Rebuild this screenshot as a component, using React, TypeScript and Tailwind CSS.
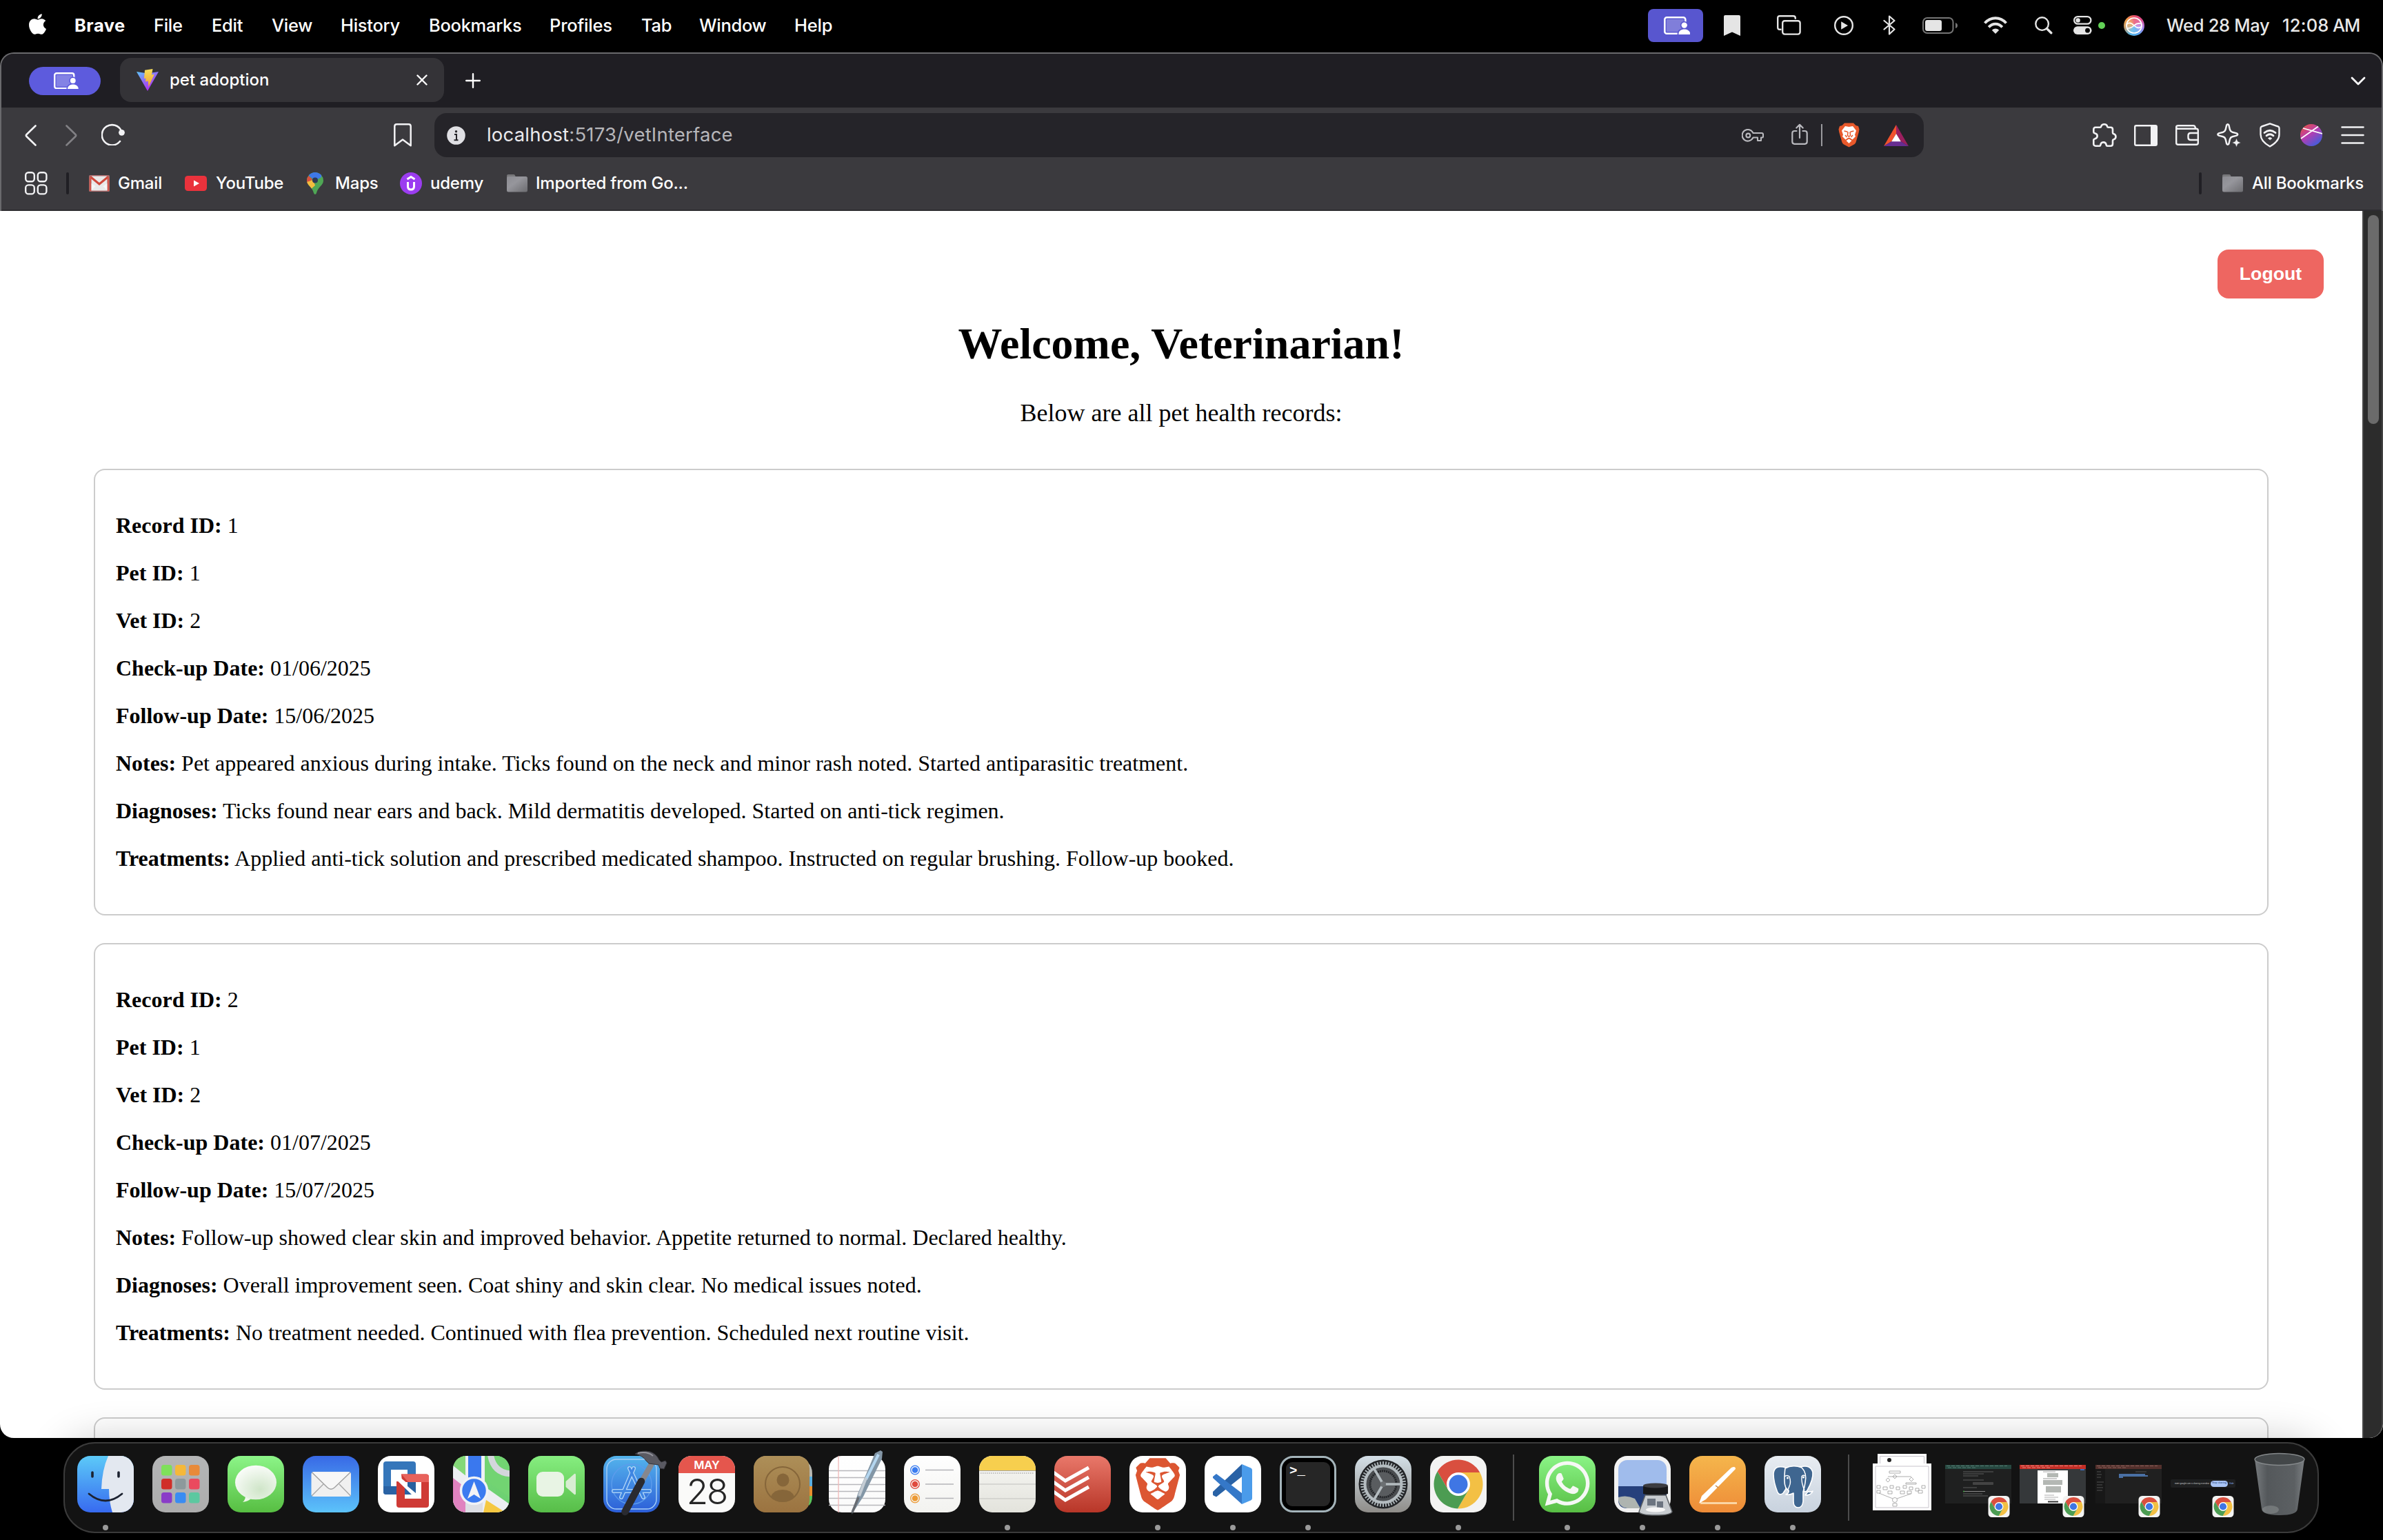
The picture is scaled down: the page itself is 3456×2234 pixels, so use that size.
import React from "react";
import { FaApple, FaBrave, FaWhatsapp } from "react-icons/fa6";

type Kids = { children?: React.ReactNode };

/* ---------- shared glyphs ---------- */

function ScreenShare({ bg, className }: { bg: string; className: string }) {
  return (
    <svg viewBox="0 0 38.5 26" className={className} fill="none">
      <rect x="1.3" y="1.3" width="30" height="23.4" rx="3" stroke="#fff" strokeWidth="2.6" />
      <rect x="4" y="4" width="25" height="18" fill="#fff" fillOpacity=".24" />
      <g stroke={bg} strokeWidth="3.4" fill={bg}>
        <circle cx="29.7" cy="12.6" r="4.2" />
        <path d="M21.4 27v-2c0-4 3.6-6.6 8.4-6.6s8.4 2.6 8.4 6.6v2z" />
      </g>
      <circle cx="29.7" cy="12.6" r="4.2" fill="#fff" />
      <path d="M21.4 26v-.8c0-4 3.6-6.7 8.4-6.7s8.4 2.7 8.4 6.7v.8z" fill="#fff" />
    </svg>
  );
}

function Chrome({ className, plain }: { className: string; plain?: boolean }) {
  return (
    <svg viewBox="0 0 82 82" className={className}>
      <rect width="82" height="82" rx={plain ? 14 : 19} fill="#f3f3f2" />
      <g transform="translate(41 41)">
        <path d="M-14.7 8.5L-30.3-18.5A35.5 35.5 0 0 1 31.2-17H0L0 0z" fill="#d94f3f" />
        <path d="M0-17H31.2A35.5 35.5 0 0 1-.9 35.5L14.7 8.5 0 0z" fill="#f3c044" />
        <path d="M14.7 8.5L-.9 35.5A35.5 35.5 0 0 1-30.3-18.5L-14.7 8.5 0 0z" fill="#4c9c52" />
        <circle r="17" fill="#fff" />
        <circle r="13.5" fill="#3f76e4" />
      </g>
    </svg>
  );
}

function Folder() {
  return (
    <svg viewBox="0 0 30 26" className="h-[26px] w-[30px]">
      <defs>
        <linearGradient id="fold" x1="0" y1="0" x2="1" y2="1">
          <stop offset="0" stopColor="#8c8c92" />
          <stop offset=".4" stopColor="#96969c" />
          <stop offset="1" stopColor="#6c6c70" />
        </linearGradient>
      </defs>
      <path d="M0 6V2q0-2 2-2h8q2 0 2.500 3l1 3z" fill="#77777a" />
      <rect y="3" width="30" height="22.500" rx="2.500" fill="url(#fold)" />
    </svg>
  );
}

/* ---------- menu bar ---------- */

function MenuBar() {
  return (
    <div className="flex h-[76px] w-full items-center bg-black pb-[3px] text-[25.5px] leading-none text-white">
      <FaApple className="-mt-[4px] ml-[40px] h-[34px] w-[29px]" />
      <span className="ml-[39px] w-[115px] font-bold tracking-[0.5px]">Brave</span>
      <span className="w-[84px] font-medium tracking-[-0.3px]">File</span>
      <span className="w-[87px] font-medium tracking-[-0.3px]">Edit</span>
      <span className="w-[100px] font-medium tracking-[-0.3px]">View</span>
      <span className="w-[128px] font-medium tracking-[-0.3px]">History</span>
      <span className="w-[175px] font-medium tracking-[-0.3px]">Bookmarks</span>
      <span className="w-[133px] font-medium tracking-[-0.2px]">Profiles</span>
      <span className="w-[84px] font-medium tracking-[-0.3px]">Tab</span>
      <span className="w-[138px] font-medium tracking-[-0.3px]">Window</span>
      <span className="font-medium tracking-[-0.2px]">Help</span>
      <div className="ml-auto flex items-center">
        <div className="flex h-[48px] w-[80px] items-center justify-center rounded-[8px] bg-[#5856cf]">
          <ScreenShare bg="#5856cf" className="ml-[4px] h-[26px] w-[38.5px]" />
        </div>
        <svg viewBox="0 0 24 30" className="ml-[30px] h-[30px] w-[24px]">
          <path d="M0 2q0-2 2-2h20q2 0 2 2v28l-12-5.500L0 30z" fill="#e5e5e5" />
        </svg>
        <svg viewBox="0 0 35 29" className="ml-[53px] h-[29px] w-[35px]" fill="none" stroke="#e5e5e5" strokeWidth="2.400">
          <path d="M6.500 20.800H4.200q-3 0-3-3V4.200q0-3 3-3h19.600q3 0 3 3v1.500" />
          <rect x="8.200" y="8.200" width="25.400" height="19.400" rx="3" />
        </svg>
        <svg viewBox="0 0 28 28" className="ml-[48px] h-[28px] w-[28px]">
          <circle cx="14" cy="14" r="12.800" fill="none" stroke="#e5e5e5" strokeWidth="2.400" />
          <path d="M10.200 8.200v11.600L20 14z" fill="#e5e5e5" />
        </svg>
        <svg viewBox="0 0 18 29" className="ml-[43px] h-[29px] w-[18px]" fill="none" stroke="#e5e5e5" strokeWidth="2.200" strokeLinejoin="round" strokeLinecap="round">
          <path d="M1.500 8l15 12.500L9 27.500v-26L16.500 8 1.500 20.500" />
        </svg>
        <svg viewBox="0 0 51 24" className="ml-[39px] h-[24px] w-[51px]">
          <rect x="1" y="1" width="43.500" height="22" rx="6" fill="none" stroke="#757575" strokeWidth="2" />
          <rect x="4" y="4" width="24" height="16" rx="3" fill="#e5e5e5" />
          <path d="M48 8q3 1 3 4t-3 4z" fill="#757575" />
        </svg>
        <svg viewBox="0 0 34 25" className="ml-[38px] h-[25px] w-[34px]" fill="none" stroke="#e5e5e5" strokeWidth="4">
          <path d="M1.500 9.500Q8 2.200 17 2.200T32.500 9.500" />
          <path d="M7.200 15.300Q11.500 10.800 17 10.800T26.800 15.300" />
          <path d="M17 25l-5.200-5.300q2.200-2.200 5.200-2.200t5.200 2.200z" fill="#e5e5e5" stroke="none" />
        </svg>
        <svg viewBox="0 0 26 26" className="ml-[40px] h-[26px] w-[26px]" fill="none" stroke="#e5e5e5" strokeLinecap="round">
          <circle cx="10.600" cy="10.600" r="9.300" strokeWidth="2.400" />
          <path d="M17.500 17.500l6.300 6.300" strokeWidth="3.400" />
        </svg>
        <svg viewBox="0 0 27 27" className="ml-[30px] h-[27px] w-[27px]">
          <rect x="1.100" y="1.100" width="24.300" height="10.600" rx="5.300" fill="none" stroke="#e5e5e5" strokeWidth="2.200" />
          <circle cx="6.600" cy="6.400" r="3.200" fill="#e5e5e5" />
          <rect y="15.300" width="26.500" height="11.700" rx="5.850" fill="#e5e5e5" />
          <circle cx="20.500" cy="21.200" r="3.400" fill="#000" />
        </svg>
        <div className="ml-[9px] h-[10px] w-[10px] rounded-full bg-[#62d256]" />
        <div className="ml-[27px] flex h-[30px] w-[30px] items-center justify-center rounded-full bg-[conic-gradient(#e8506a,#e04a8a,#b08af0,#58a8f0,#5ab8e8,#c8a070,#f0a048,#e8506a)]">
          <svg viewBox="0 0 24 24" className="h-[24px] w-[24px]" fill="none" stroke="#fff" strokeWidth="1.700">
            <circle cx="12" cy="12" r="11" fill="#fff" fillOpacity=".18" />
            <path d="M1.500 10Q6 6 12 12t10.500 1.500M2.500 16Q8 16 12 12t10-3" />
          </svg>
        </div>
        <span className="ml-[32px] w-[168px] whitespace-nowrap font-medium tracking-[-0.3px] text-[#e8e8e8]">Wed 28 May</span>
        <span className="w-[73px] whitespace-nowrap font-medium tracking-[0.2px] text-[#e8e8e8]">12:08</span>
        <span className="w-[73px] whitespace-nowrap font-medium tracking-[-1px] text-[#e8e8e8]">AM</span>
      </div>
    </div>
  );
}

/* ---------- browser chrome ---------- */

function TabStrip() {
  return (
    <div className="flex h-[78px] items-center bg-[#1f1e23] text-white">
      <div className="ml-[40px] flex h-[41px] w-[104px] items-center justify-center rounded-full bg-[#5d5bdd]">
        <ScreenShare bg="#5d5bdd" className="ml-[4px] h-[24.500px] w-[36px]" />
      </div>
      <div className="-mt-[2px] ml-[28px] flex h-[64px] w-[470px] items-center rounded-[16px] bg-[#343337]">
        <svg viewBox="0 0 32 32" className="ml-[24px] h-[32px] w-[32px]">
          <defs>
            <linearGradient id="va" x1="0" y1="0" x2=".6" y2="1">
              <stop offset="0" stopColor="#5cc8fa" />
              <stop offset=".5" stopColor="#8f6bf5" />
              <stop offset="1" stopColor="#b32cf0" />
            </linearGradient>
            <linearGradient id="vb" x1="0" y1="0" x2="0" y2="1">
              <stop offset="0" stopColor="#f8e05a" />
              <stop offset="1" stopColor="#f0a030" />
            </linearGradient>
          </defs>
          <path d="M0 4l16 2.500L32 4 16 32z" fill="url(#va)" />
          <path d="M12 1.800L23.500 0l-1.500 8.500 3.800-.8L17.500 26l-.8-8.500-3.700 1 .5-5-2.500.5z" fill="url(#vb)" />
        </svg>
        <span className="ml-[16px] w-[358px] text-[24px] font-medium leading-none">pet adoption</span>
        <svg viewBox="0 0 16 16" className="h-[16px] w-[16px]" stroke="#fff" strokeWidth="2.400" strokeLinecap="round">
          <path d="M1.500 1.500l13 13M14.500 1.500l-13 13" />
        </svg>
      </div>
      <svg viewBox="0 0 22 22" className="ml-[31px] h-[22px] w-[22px]" stroke="#fff" strokeWidth="2.400" strokeLinecap="round">
        <path d="M11 1.200v19.600M1.200 11h19.600" />
      </svg>
      <svg viewBox="0 0 22 13" className="ml-auto mr-[23px] h-[13px] w-[22px]" stroke="#fff" strokeWidth="2.800" strokeLinecap="round" strokeLinejoin="round" fill="none">
        <path d="M2 2l9 9 9-9" />
      </svg>
    </div>
  );
}

function Slot({ children }: Kids) {
  return <div className="flex w-[60px] items-center justify-center">{children}</div>;
}

function ToolBar() {
  return (
    <div className="flex h-[80px] items-center">
      <svg viewBox="0 0 17 31" className="ml-[34px] h-[31px] w-[17px]" fill="none" stroke="#f2f2f4" strokeWidth="2.600" strokeLinecap="round" strokeLinejoin="round">
        <path d="M15.500 1.500L2.600 14q-1.500 1.500 0 3l12.900 12.500" />
      </svg>
      <svg viewBox="0 0 17 31" className="ml-[42px] h-[31px] w-[17px]" fill="none" stroke="#818084" strokeWidth="2.600" strokeLinecap="round" strokeLinejoin="round">
        <path d="M1.500 1.500L14.400 14q1.500 1.500 0 3L1.500 29.500" />
      </svg>
      <svg viewBox="0 0 34 32" className="ml-[35px] -mt-[2px] h-[32px] w-[34px]" fill="none" stroke="#f2f2f4" strokeWidth="2.600" strokeLinecap="round">
        <path d="M29 11A14.700 14.700 0 1 0 27 26" />
        <circle cx="29.500" cy="13.300" r="4.400" fill="#f2f2f4" stroke="none" />
      </svg>
      <svg viewBox="0 0 26 34" className="ml-[390px] h-[34px] w-[26px]" fill="none" stroke="#f2f2f4" strokeWidth="2.500" strokeLinejoin="round">
        <path d="M1.300 4.300q0-3 3-3h17.400q3 0 3 3v28L13 23.500 1.300 32.300z" />
      </svg>
      <div className="ml-[33px] flex h-[64px] w-[2160px] items-center rounded-[18px] bg-[#252429]">
        <svg viewBox="0 0 27 27" className="ml-[18px] h-[27px] w-[27px]">
          <circle cx="13.500" cy="13.500" r="13.300" fill="#e0e0e4" />
          <circle cx="13.500" cy="7.700" r="1.700" fill="#252429" />
          <path d="M11 12h3v8M10.500 20.200h6" stroke="#252429" strokeWidth="2" fill="none" />
        </svg>
        <span className="ml-[31px] flex-1 text-[27.5px] leading-none tracking-[0.2px] text-[#b6b6ba]">
          <span className="text-[#e9e9ec]">localhost</span>:5173/vetInterface
        </span>
        <svg viewBox="0 0 32 19" className="h-[19px] w-[32px]" fill="none" stroke="#b9b9be" strokeWidth="2.100" strokeLinejoin="round">
          <path d="M16.500 6H29q2 0 2 2v3q0 1.500-1.500 1.500H28V17h-5v-4.500h-6.500A8.300 8.300 0 1 1 16.500 6z" />
          <circle cx="9.300" cy="9.500" r="2.900" />
        </svg>
        <svg viewBox="0 0 24 32" className="ml-[40px] -mt-[2px] h-[32px] w-[24px]" fill="none" stroke="#b9b9be" strokeWidth="2.200" strokeLinecap="round" strokeLinejoin="round">
          <path d="M7.500 11H4.500q-3.200 0-3.200 3.200v12.400q0 3.200 3.200 3.200h15q3.200 0 3.200-3.200V14.200q0-3.200-3.200-3.200h-3M12 21V2M7.300 6.500L12 1.800l4.700 4.700" />
        </svg>
        <div className="ml-[19px] h-[32px] w-[2px] bg-[#9a9a9e]" />
        <svg viewBox="0 0 31 35" className="ml-[23px] h-[36px] w-[31px]">
          <path d="M9 0h13l3.500 3.500 3.500 1L30.500 9l-.8 4.500L25.500 28q-.8 2-2.500 3l-7.500 4L8 31q-1.700-1-2.500-3L1.300 13.500.5 9 2 4.500l3.500-1z" fill="#e8592b" />
          <path d="M10 4.500l5.500 1 5.500-1L26 11l-2 6 1 2.500-4.500 4.500-3.500-2.500-1.500-.5-1.500.5-3.500 2.500L6 19.500 7 17l-2-6z" fill="#fff" />
          <path d="M15.500 23l4 2.500-4 4-4-4z" fill="#fff" />
          <path d="M8.500 11.500l4 1 1.500 1-.6 4.500 2.100 1.500 2.100-1.500-.6-4.500 1.500-1 4-1M10 17.500l2.500 3M21 17.500l-2.500 3" stroke="#e8592b" strokeWidth="1.500" fill="none" />
        </svg>
        <svg viewBox="0 0 36 31" className="ml-[35px] mr-[22px] h-[31px] w-[36px]">
          <path d="M18 0L0 31l11.500-7L18 13z" fill="#f0522d" />
          <path d="M18 0l18 31-11.500-7L18 13z" fill="#9b1f5f" />
          <path d="M0 31h36l-11.500-7h-13z" fill="#662d91" />
          <path d="M18 13l6.800 11.200H11.200z" fill="#fff" />
        </svg>
      </div>
      <div className="ml-[232px] flex items-center">
        <Slot>
          <svg viewBox="0 0 35 34" className="h-[34px] w-[35px]" fill="none" stroke="#f2f2f4" strokeWidth="2.600" strokeLinejoin="round">
            <path d="M4 5.800h6.600q1.400 0 1.700-1.500Q13 1.300 16.700 1.300T21 4.300q.3 1.500 1.700 1.500H26q3 0 3 3v4.700q0 1.400 1.500 1.800 3 .9 3 4t-3 4q-1.500.4-1.500 1.800v4.400q0 3.200-3 3.200h-5q-1 0-1.300-1.300-.6-4-4.200-4t-4.200 4Q11 32.700 10 32.700H4.300q-3 0-3-3V24q0-1.300 1.500-1.600 3.900-.7 3.900-4.100t-3.900-4.100q-1.500-.3-1.500-1.600V8.800q0-3 2.700-3z" />
          </svg>
        </Slot>
        <Slot>
          <svg viewBox="0 0 34 31" className="h-[31px] w-[34px]">
            <rect x="1.200" y="1.200" width="31.600" height="28.600" rx="1.800" fill="none" stroke="#f2f2f4" strokeWidth="2.400" />
            <path d="M24 1h9v29h-9z" fill="#f2f2f4" />
          </svg>
        </Slot>
        <Slot>
          <svg viewBox="0 0 34 30" className="h-[30px] w-[34px]" fill="none" stroke="#f2f2f4" strokeWidth="2.400" strokeLinejoin="round">
            <path d="M32.800 12V8.300q0-2.600-2.600-2.600H3.800q-2.600 0-2.600-2.400 0-2.100 2.600-2.100H26q2 0 2.600 2.200l.6 2.300M1.200 3.500v22.700q0 2.600 2.600 2.600h26.400q2.600 0 2.600-2.600V12H22q-3.500 0-3.500 3.500v3q0 3.500 3.500 3.500h10.500" />
          </svg>
        </Slot>
        <Slot>
          <svg viewBox="0 0 34 34" className="h-[34px] w-[34px] overflow-visible">
            <path d="M14.200 2.500q1.600-2.400 3.200 0l1.600 6.700q.8 2.800 3.600 3.600l6.200 1.600q2.900 1.600 0 3.200l-6.200 1.600q-2.800.8-3.600 3.600l-1.600 6.700q-1.600 2.400-3.200 0l-1.600-6.700q-.8-2.800-3.600-3.600L2.800 17.600q-2.900-1.600 0-3.200L9 12.800q2.800-.8 3.600-3.600z" fill="none" stroke="#f2f2f4" strokeWidth="2.500" strokeLinejoin="round" />
            <path d="M28.500 21.500l1.900 4.600 4.600 1.900-4.600 1.900-1.900 4.600-1.900-4.600L22 28l4.600-1.900z" fill="#f2f2f4" stroke="#3b3a3e" strokeWidth="0.600" />
          </svg>
        </Slot>
        <Slot>
          <svg viewBox="0 0 30 36" className="h-[36px] w-[30px]" fill="none" stroke="#f2f2f4" strokeWidth="2.400" strokeLinejoin="round" strokeLinecap="round">
            <path d="M15 1.300l12 4.200q1.500.6 1.500 2.500V17q0 10-13.500 17.500Q1.500 27 1.500 17V8q0-1.900 1.500-2.500z" />
            <path d="M7 14.500q8-6.500 16 0M10 18.800q5-4 10 0" strokeWidth="2.800" />
            <path d="M15 24.500l-2.500-2q2.500-1.800 5 0z" fill="#f2f2f4" strokeWidth="1" />
          </svg>
        </Slot>
        <Slot>
          <svg viewBox="0 0 32 32" className="h-[32px] w-[32px]">
            <defs>
              <linearGradient id="prof" x1=".1" y1="0" x2=".8" y2="1">
                <stop offset="0" stopColor="#e8553c" />
                <stop offset=".45" stopColor="#b83cb0" />
                <stop offset="1" stopColor="#3560e0" />
              </linearGradient>
            </defs>
            <circle cx="16" cy="16" r="16" fill="url(#prof)" />
            <path d="M4 6l28 8M26 3.500L1 21" stroke="#fff" strokeWidth="1.700" />
          </svg>
        </Slot>
        <Slot>
          <svg viewBox="0 0 34 26" className="h-[26px] w-[34px]" stroke="#f2f2f4" strokeWidth="2.500" strokeLinecap="round">
            <path d="M1.500 1.500h31M1.500 13h31M1.500 24.500h31" />
          </svg>
        </Slot>
      </div>
    </div>
  );
}

function BookmarksBar() {
  return (
    <div className="flex h-[60px] items-center text-[24px] font-medium leading-none text-white">
      <svg viewBox="0 0 33 34" className="ml-[34px] h-[34px] w-[33px]" fill="none" stroke="#f2f2f4" strokeWidth="2.400">
        <rect x="1.200" y="1.200" width="12.600" height="13" rx="4" />
        <rect x="18.800" y="1.200" width="12.600" height="13" rx="4" />
        <rect x="1.200" y="19.400" width="12.600" height="13" rx="4" />
        <rect x="18.800" y="19.400" width="12.600" height="13" rx="4" />
      </svg>
      <div className="ml-[27px] h-[32px] w-[4px] rounded-full bg-[#201f24]" />
      <svg viewBox="0 0 30 24" className="ml-[29px] h-[24px] w-[30px]">
        <rect width="30" height="24" rx="1.500" fill="#a8696a" />
        <rect x="3.500" y="1.500" width="23" height="21" fill="#e9e9e9" />
        <path d="M3.500 22.500V12l6 4zM26.500 22.500V12l-6 4z" fill="#f6f6f6" />
        <path d="M2.200 2.500L15 13 27.800 2.500" stroke="#d0493c" strokeWidth="3" fill="none" />
        <path d="M2 3v20M28 3v20" stroke="#d0574c" strokeWidth="2.400" />
      </svg>
      <span className="ml-[12px] w-[97px] tracking-[-0.2px]">Gmail</span>
      <svg viewBox="0 0 32 22" className="h-[22px] w-[32px]">
        <rect width="32" height="22" rx="4.500" fill="#ea323c" />
        <path d="M13 6.500v9l8-4.500z" fill="#fff" />
      </svg>
      <span className="ml-[13px] w-[132px] tracking-[-0.2px]">YouTube</span>
      <svg viewBox="0 0 24 32" className="h-[32px] w-[24px]">
        <defs>
          <clipPath id="pin">
            <path d="M12 0a12 12 0 0 1 12 12c0 7-8 9-10 18q-.6 2-2 2t-2-2C8 21 0 19 0 12A12 12 0 0 1 12 0z" />
          </clipPath>
        </defs>
        <g clipPath="url(#pin)">
          <rect width="24" height="32" fill="#4fa655" />
          <path d="M3 0h18v7L12 12 3 5z" fill="#3f78e8" />
          <path d="M-1 2l9 8-8 10z" fill="#d9503f" />
          <path d="M0 14l9-3 3 8-8 7z" fill="#f2bd3e" />
        </g>
        <circle cx="12" cy="11.500" r="4" fill="#2d3a55" />
      </svg>
      <span className="ml-[17px] w-[94px] tracking-[-0.2px]">Maps</span>
      <svg viewBox="0 0 32 32" className="h-[32px] w-[32px]" fill="none" stroke="#fff" strokeWidth="3">
        <circle cx="16" cy="16" r="16" fill="#9b3df0" stroke="none" />
        <path d="M10.500 10L16 6.500l5.500 3.500M11.500 14v6.500q0 4.500 4.500 4.500t4.500-4.500V14" />
      </svg>
      <span className="ml-[12px] w-[111px] tracking-[-0.2px]">udemy</span>
      <Folder />
      <span className="ml-[12px] whitespace-nowrap tracking-[-0.2px]">Imported from Go...</span>
      <div className="ml-auto h-[32px] w-[4px] rounded-full bg-[#201f24]" />
      <div className="ml-[30px] flex">
        <Folder />
      </div>
      <span className="ml-[13px] w-[188px] whitespace-nowrap tracking-[-0.2px]">All Bookmarks</span>
    </div>
  );
}

/* ---------- page ---------- */

const records = [
  {
    id: 1,
    checkup: "01/06/2025",
    followup: "15/06/2025",
    notes: "Pet appeared anxious during intake. Ticks found on the neck and minor rash noted. Started antiparasitic treatment.",
    diagnoses: "Ticks found near ears and back. Mild dermatitis developed. Started on anti-tick regimen.",
    treatments: "Applied anti-tick solution and prescribed medicated shampoo. Instructed on regular brushing. Follow-up booked.",
  },
  {
    id: 2,
    checkup: "01/07/2025",
    followup: "15/07/2025",
    notes: "Follow-up showed clear skin and improved behavior. Appetite returned to normal. Declared healthy.",
    diagnoses: "Overall improvement seen. Coat shiny and skin clear. No medical issues noted.",
    treatments: "No treatment needed. Continued with flea prevention. Scheduled next routine visit.",
  },
];

function Field({ label, value }: { label: string; value: string | number }) {
  return (
    <p>
      <strong className="font-bold">{label}:</strong> {value}
    </p>
  );
}

function Page() {
  return (
    <div className="flex h-[1780px] w-full overflow-hidden rounded-b-[20px] bg-white">
      <main className="flex w-[3426px] flex-col font-['Liberation_Serif',serif] text-black">
        <div className="flex justify-end pr-[56px] pt-[56px]">
          <button className="h-[71px] w-[154px] rounded-[16px] bg-[#ee6661] font-['Liberation_Sans',sans-serif] text-[26.7px] font-bold leading-none text-white">
            Logout
          </button>
        </div>
        <h1 className="mt-[29px] text-center text-[64px] font-bold leading-[74px]">Welcome, Veterinarian!</h1>
        <p className="mt-[43px] text-center text-[36px] leading-[41px]">Below are all pet health records:</p>
        <div className="mt-[60px] flex flex-col gap-[40px] px-[136px] text-[32px] leading-[37px]">
          {records.map((r) => (
            <section key={r.id} className="flex h-[648px] flex-col gap-[32px] rounded-[16px] border-2 border-[#ccc] px-[30px] pt-[62px]">
              <Field label="Record ID" value={r.id} />
              <Field label="Pet ID" value={1} />
              <Field label="Vet ID" value={2} />
              <Field label="Check-up Date" value={r.checkup} />
              <Field label="Follow-up Date" value={r.followup} />
              <Field label="Notes" value={r.notes} />
              <Field label="Diagnoses" value={r.diagnoses} />
              <Field label="Treatments" value={r.treatments} />
            </section>
          ))}
          <section className="h-[648px] shrink-0 rounded-[16px] border-2 border-[#ccc]" />
        </div>
      </main>
      <div className="w-[30px] rounded-br-[20px] border-x-2 border-[#444] bg-[#2c2c2c] pl-[6px] pt-[6px]">
        <div className="h-[303px] w-[16px] rounded-full bg-[#6b6b6b]" />
      </div>
    </div>
  );
}

/* ---------- dock ---------- */

function App82({ children, dot, last }: Kids & { dot?: boolean; last?: boolean }) {
  return (
    <div className={last ? "flex w-[82px] shrink-0 flex-col items-center" : "mr-[27px] flex w-[82px] shrink-0 flex-col items-center"}>
      {children}
      {dot && <div className="mt-[18px] h-[8px] w-[8px] rounded-full bg-[#9a9a9a]" />}
    </div>
  );
}

function Tile({ children, id, from, to }: Kids & { id: string; from: string; to: string }) {
  return (
    <svg viewBox="0 0 82 82" className="h-[82px] w-[82px] overflow-visible">
      <defs>
        <linearGradient id={id} x1="0" y1="0" x2="0" y2="1">
          <stop offset="0" stopColor={from} />
          <stop offset="1" stopColor={to} />
        </linearGradient>
        <clipPath id={id + "c"}>
          <rect width="82" height="82" rx="19" />
        </clipPath>
      </defs>
      <rect width="82" height="82" rx="19" fill={`url(#${id})`} />
      {children}
    </svg>
  );
}

const launchColors = ["#7fe05a", "#f5b83a", "#e88a3a", "#d02e28", "#8d999c", "#ea4a5e", "#8a3cc8", "#3a8cf2", "#5cc8a0"];
const teeth = Array.from({ length: 48 }, (_, i) => i * 7.5);

function Thumb({ children, w }: Kids & { w: string }) {
  return <div className={"relative flex h-[90px] shrink-0 " + w}>{children}</div>;
}

function Badge() {
  return <Chrome plain className="absolute right-[2px] bottom-[1px] h-[31px] w-[32px]" />;
}

function Dock() {
  return (
    <div className="relative ml-[92px] mt-[6px] flex h-[132px] w-[3271px] items-start rounded-[46px] border-2 border-[#3b3b3b] bg-[#131313] pl-[18px] pt-[18px] shadow-[0_0_60px_rgba(0,0,0,0.24)]">
      <App82 dot>
        <Tile id="fi" from="#5ccaf8" to="#376af0">
          <path d="M45 0h37v82H51Q46 66 46 48H35Q36 20 45 0z" fill="#e3e8f0" clipPath="url(#fic)" />
          <path d="M22 24v6M60 24v6" stroke="#1c2230" strokeWidth="3.600" strokeLinecap="round" />
          <path d="M17 55q24 20 48 0" stroke="#1c2230" strokeWidth="2.800" strokeLinecap="round" fill="none" />
        </Tile>
      </App82>
      <App82>
        <Tile id="la" from="#b4b5b6" to="#adadad">
          {launchColors.map((c, i) => (
            <rect key={c} x={13 + (i % 3) * 20} y={13 + Math.floor(i / 3) * 20} width="15.500" height="15.500" rx="3.500" fill={c} />
          ))}
        </Tile>
      </App82>
      <App82>
        <Tile id="me" from="#8cf588" to="#57be42">
          <defs>
            <radialGradient id="bub" cx=".6" cy=".7" r=".8">
              <stop offset="0" stopColor="#cfe5c8" />
              <stop offset="1" stopColor="#fff" />
            </radialGradient>
          </defs>
          <path d="M26 54q1 9-4 13 8-1 12-5z" fill="#eef7ea" />
          <ellipse cx="41" cy="38.500" rx="30" ry="24.800" fill="url(#bub)" />
        </Tile>
      </App82>
      <App82>
        <Tile id="ma" from="#3869e6" to="#5cc3fa">
          <rect x="12.500" y="23" width="57.500" height="36" rx="3.500" fill="#f0f0f0" />
          <path d="M13 58l17-17M69.500 58L53 41" stroke="#a8a8a8" strokeWidth="1.400" />
          <path d="M13.500 24l22.500 22q5 4.500 10 0L69 24" fill="#f7f7f7" stroke="#a0a0a0" strokeWidth="1.400" />
        </Tile>
      </App82>
      <App82>
        <Tile id="vm" from="#fff" to="#fff">
          <path fillRule="evenodd" d="M12 8h39q4 0 4 4v40q0 4-4 4H12q-4 0-4-4V12q0-4 4-4zm7 12v24h24V20z" fill="#3576ba" />
          <path d="M8 44h47v8q0 4-4 4H12q-4 0-4-4z" fill="#2a62a4" />
          <path fillRule="evenodd" d="M34 26.500h36q4 0 4 4V71q0 4-4 4H31q-4 0-4-4V37h8zM39 38v24h24V38z" fill="#cf3a35" />
          <path d="M34 26.500h36q4 0 4 4V38H44z" fill="#e8625c" />
          <path d="M19 20l36 30v6h-6L19 27z" fill="#fff" />
          <path d="M55 38v16l-12-10V38z" fill="#28609f" />
        </Tile>
      </App82>
      <App82>
        <Tile id="mp" from="#78d878" to="#6ace70">
          <g clipPath="url(#mpc)">
            <path d="M0 12l82 58v12H0z" fill="#eceef2" />
            <path d="M0 32l18 14v36H0z" fill="#e082c0" />
            <path d="M0 14l20 16-2-30H0z" fill="#84d878" />
            <path d="M48 64l28 18H44z" fill="#f5c842" />
            <path d="M18 46h25v36H18z" fill="#dcdee4" />
            <path d="M18 0h28v60H18z" fill="#eef0f4" />
            <path d="M22 0h19v50H22z" fill="#3a78ee" />
            <path d="M46 0h36v60L46 34z" fill="#72d472" />
            <path d="M54-4q4 30 32 30" stroke="#d4d6dc" strokeWidth="9" fill="none" />
          </g>
          <circle cx="30.500" cy="50.500" r="19" fill="#3b7bf0" stroke="#f0f2f6" strokeWidth="3.500" />
          <path d="M30.500 37l9.500 25-9.500-6-9.500 6z" fill="#f4f4f6" />
        </Tile>
      </App82>
      <App82>
        <Tile id="ft" from="#86ee80" to="#57bd48">
          <rect x="12" y="23" width="40" height="36" rx="9" fill="#e8f4e4" />
          <path d="M54.500 37L67 26q2-1 2 1.500v27q0 2.500-2 1.500L54.500 45z" fill="#d8edd2" />
        </Tile>
      </App82>
      <App82>
        <Tile id="xc" from="#54b4ec" to="#2c5ed8">
          <rect x="5" y="5" width="72" height="72" rx="14" fill="none" stroke="#a8d0f6" strokeWidth="1.400" />
          <circle cx="41" cy="41" r="29" fill="none" stroke="#5c9cec" strokeWidth="1.400" />
          <g fill="none" stroke="#b4d8f8" strokeWidth="6" strokeLinecap="round">
            <path d="M44 18L26 60M38 18l20 42M15 51h52" />
          </g>
          <g fill="none" stroke="#3f86e2" strokeWidth="3.400" strokeLinecap="round">
            <path d="M44 18L26 60M38 18l20 42M15 51h52" />
          </g>
          <path d="M71 10L55 38" stroke="#86878d" strokeWidth="8" />
          <path d="M55 37L31.500 81" stroke="#292a30" strokeWidth="10.500" strokeLinecap="round" />
          <path d="M46-3Q56-9 68-6q9 3 13 12l3 3 6-2 2 3-4 9-6-1-2-5-14-2-4-4Q58 0 46-3z" fill="#5a5a62" stroke="#34343a" strokeWidth="1" />
          <path d="M50-4q14-3 22 4" stroke="#94949c" strokeWidth="2" fill="none" />
        </Tile>
      </App82>
      <App82>
        <div className="flex h-[82px] w-[82px] flex-col overflow-hidden rounded-[19px] bg-[#fafaf9]">
          <div className="flex h-[25px] shrink-0 items-end justify-center bg-[#e5564d] text-[16.5px] font-semibold leading-[24px] text-white">MAY</div>
          <div className="text-center text-[51px] font-light leading-[53px] tracking-[-2px] text-[#262626]">28</div>
        </div>
      </App82>
      <App82>
        <Tile id="co" from="#ad8f58" to="#9b7340">
          <path d="M78 10q7 4 7 16v4h-7z" fill="#b8b8b0" />
          <path d="M80 30h5v14h-5z" fill="#5aaee0" />
          <path d="M80 44h5v14h-5z" fill="#e8902e" />
          <path d="M80 58h5q0 10-5 14z" fill="#5cc45a" />
          <rect width="81" height="82" rx="18" fill="url(#co)" />
          <circle cx="42" cy="41" r="25" fill="none" stroke="#86663a" strokeWidth="2" />
          <ellipse cx="42.500" cy="35" rx="9" ry="9.500" fill="#86663a" />
          <path d="M25 59q4-10 17-10t17 10q-6 7-17 7t-17-7z" fill="#86663a" />
        </Tile>
      </App82>
      <App82>
        <Tile id="te" from="#fff" to="#fafafa">
          <path d="M0 21.500h82M0 31.500h82M0 41.500h82M0 51.500h82M0 61.500h82M0 71.500h82" stroke="#b8b8bc" strokeWidth="1.300" />
          <path d="M14 0v82" stroke="#f0b8b8" strokeWidth="1.300" />
          <path d="M67-4l8-4 3 2-1 10-27 55-17 26 9-30z" fill="#8396a6" />
          <path d="M72-2L54 34" stroke="#b4d6f0" strokeWidth="4" />
          <path d="M54 32L44 58" stroke="#c4ccd4" strokeWidth="4" />
          <path d="M43 60L34 82" stroke="#686c72" strokeWidth="3.500" />
        </Tile>
      </App82>
      <App82>
        <Tile id="re" from="#fff" to="#f2f2ef">
          {["#3a7cf0", "#e04a3e", "#ec9a34"].map((c, i) => (
            <g key={c}>
              <circle cx="16" cy={20.500 + i * 20.500} r="6.300" fill="none" stroke={c} strokeWidth="1.300" />
              <circle cx="16" cy={20.500 + i * 20.500} r="4.300" fill={c} />
              <path d={`M31 ${20.500 + i * 20.500}h41`} stroke="#b4b4b8" strokeWidth="1.600" />
            </g>
          ))}
        </Tile>
      </App82>
      <App82 dot>
        <Tile id="no" from="#f8f8f5" to="#e3e3dc">
          <path d="M0 0h82v21H0z" fill="#f7cf4e" clipPath="url(#noc)" />
          <path d="M0 21.500h82" stroke="#a8a49c" strokeWidth="1.200" />
          <path d="M2 25h78" stroke="#b0b0b0" strokeWidth="1.600" strokeDasharray="1.500 1.500" />
          <path d="M0 41h82M0 62h82" stroke="#d0d0cc" strokeWidth="1.300" />
        </Tile>
      </App82>
      <App82>
        <Tile id="to" from="#e9786a" to="#b83628">
          <g clipPath="url(#toc)" fill="none" stroke="#fff" strokeWidth="5">
            <path d="M-4 22l20 14 34-19M-4 36l20 14 34-19M-4 50l20 14 34-19" />
          </g>
        </Tile>
      </App82>
      <App82 dot>
        <Tile id="br" from="#fff" to="#fff">
          <foreignObject x="8" y="2" width="66" height="78">
            <FaBrave className="h-[78px] w-[66px] text-[#dc5632]" />
          </foreignObject>
        </Tile>
      </App82>
      <App82 dot>
        <Tile id="vs" from="#fff" to="#fff">
          <path d="M12 52v4q0 1 1 1.500l4 2L54 30V12z" fill="#2962a6" />
          <path d="M12 30l5-4 37 28v16L12 32z" fill="#3578c8" />
          <path d="M54 12l13 5.500q2 1 2 3v41q0 2-2 3L54 70z" fill="#4a9bea" />
        </Tile>
      </App82>
      <App82 dot>
        <div className="flex h-[82px] w-[82px] rounded-[19px] border-[3px] border-[#a4b4ba] bg-black p-[6px]">
          <div className="flex-1 rounded-[9px] bg-[#262626] pl-[5px] pt-[4px] font-['Liberation_Mono',monospace] text-[19px] font-bold leading-none text-white">&gt;_</div>
        </div>
      </App82>
      <App82>
        <Tile id="se" from="#d4e0e8" to="#8f8d89">
          <circle cx="41" cy="41" r="35.500" fill="#222427" />
          <g stroke="#a8b0b4" strokeWidth="2">
            {teeth.map((a) => (
              <path key={a} d="M41 8v6" transform={`rotate(${a} 41 41)`} />
            ))}
          </g>
          <circle cx="41" cy="41" r="26.500" fill="#4a4d50" stroke="#b4bcc0" strokeWidth="4" />
          <circle cx="41" cy="41" r="19" fill="#595c5f" stroke="#222427" strokeWidth="3" strokeDasharray="2 1" />
          <path d="M41 41h26M41 41L28 19M41 41L28 63" stroke="#b4bcc0" strokeWidth="3.500" />
          <circle cx="41" cy="41" r="4" fill="#6c7073" />
        </Tile>
      </App82>
      <App82 dot last>
        <Chrome className="h-[82px] w-[82px]" />
      </App82>
      <div className="-mt-[2px] ml-[38px] mr-[36px] h-[96px] w-[2px] shrink-0 bg-[#4c4c4c]" />
      <App82 dot>
        <Tile id="wa" from="#8af486" to="#58be44">
          <foreignObject x="5" y="3" width="74" height="76">
            <FaWhatsapp className="h-[74px] w-[72px] text-[#f6f8f5]" />
          </foreignObject>
        </Tile>
      </App82>
      <App82 dot>
        <Tile id="pr" from="#f4f4f4" to="#f0f0f0">
          <rect x="6" y="6" width="70" height="70" rx="13" fill="#a0bcec" />
          <path d="M6 44h70v20q0 12-13 12H19Q6 76 6 64z" fill="#26407c" />
          <path d="M6 60q12-4 24 2l8 14H19Q6 74 6 62z" fill="#aeb4b0" />
          <path d="M42 44q18-5 36 0v11q-18 5-36 0z" fill="#18181a" />
          <ellipse cx="60" cy="43" rx="18" ry="3.500" fill="#3c3c40" />
          <path d="M45 57h30l9 24q-2 5-24 5t-24-5z" fill="#c8ccd0" stroke="#5c6064" strokeWidth="1.500" />
          <path d="M48 62h12v10H48zM62 66h9v9h-9z" fill="#6c7480" />
          <ellipse cx="60" cy="78" rx="14" ry="3.500" fill="#f6f6f6" />
        </Tile>
      </App82>
      <App82 dot>
        <Tile id="pg" from="#f5b64c" to="#ee8c38">
          <path d="M16 68.500h53" stroke="#fbd5a4" strokeWidth="3" />
          <path d="M61 17q6-3 6 2L24 63l-10 6 4-11z" fill="#fff" />
          <path d="M38 43l4 3" stroke="#c08040" strokeWidth="1.500" />
        </Tile>
      </App82>
      <App82 dot last>
        <Tile id="ps" from="#e8edf2" to="#c8d2de">
          <g fill="#3f6690" stroke="#fff" strokeWidth="1.600" strokeLinejoin="round">
            <path d="M31 17q-17-5-18 9 0 12 6 27 3 5 8 1l4-6z" />
            <path d="M52 16q15-4 18 8 1 10-8 26-2 3-5 1l-4-6z" />
            <path d="M63 52q5 1 7-1-2 6-11 6z" />
            <path d="M30 18q11-6 24-1 8 8 5 22-1 7-3 13v14q-1 9-7 9-7 0-7-9V54q-5 3-11 2 5-2 4-6-6-3-6-14 0-12 1-18z" />
          </g>
          <path d="M29 30q4-3 7 0 3 8 0 14-1 4-3 6M60 29q-5-2-6 1-1 8 4 20" fill="none" stroke="#fff" strokeWidth="1.400" />
          <circle cx="33.500" cy="32" r="1.500" fill="#fff" />
          <circle cx="56.500" cy="31" r="1.500" fill="#fff" />
        </Tile>
      </App82>
      <div className="-mt-[2px] ml-[39px] mr-[34px] h-[96px] w-[2px] shrink-0 bg-[#4c4c4c]" />
      <svg viewBox="0 0 85 82" className="-mt-[3px] mr-[20px] h-[82px] w-[85px] shrink-0">
        <path d="M7 0h71v14h7v68H0V14h7z" fill="#fff" />
        <path d="M10.500 14V3.500h64V14M4 18h77v60H4z" fill="none" stroke="#c8c4cc" strokeWidth="1" />
        <circle cx="24" cy="9" r="3" fill="#222" />
        <g fill="#fff" stroke="#9a9a9a" strokeWidth=".8">
          <path d="M24 25h16v3H24zM32 30l3 3-3 3-3-3zM22 35l3 3-3 3-3-3zM56 34l3 3-3 3-3-3zM48 42h15v2H48z" />
          <path d="M6 46h5v4H6zM15 48h6v4h-6zM25 46h5v4h-5zM34 48h5v4h-5zM44 46h5v4h-5zM53 48h5v4h-5zM62 50h5v4h-5zM71 46h5v4h-5zM6 53h5v4H6zM22 54h6v4h-6zM40 54h6v4h-6zM50 54h6v4h-6zM66 53h6v4h-6z" />
          <circle cx="32" cy="67" r="3.500" />
          <path d="M29 72h6v4h-6zM22 33h34M9 57l20 8M55 58L35 65" />
        </g>
      </svg>
      <Thumb w="w-[96px] mr-[12px]">
        <svg viewBox="0 0 96 56" className="mt-[13px] h-[56px] w-[96px]">
          <rect width="96" height="56" fill="#1f2020" />
          <path d="M0 0h96v6H0z" fill="#264840" />
          <path d="M2 1.500h88M4 4h40" stroke="#5a8076" strokeWidth=".9" strokeDasharray="5 2" />
          <path d="M26 10h44M26 13h30M26 16h22M26 22h30M26 33h20M26 42h28M26 45h36" stroke="#5c5c5c" strokeWidth="1" />
          <path d="M28 38.500h30" stroke="#8a8a8a" strokeWidth="1" />
          <circle cx="27" cy="38.500" r="1" fill="#4cb04c" />
          <rect x="40" y="25" width="30" height="4" rx="1" fill="#444" />
        </svg>
        <Badge />
      </Thumb>
      <Thumb w="w-[96px] mr-[14px]">
        <svg viewBox="0 0 96 56" className="mt-[13px] h-[56px] w-[96px]">
          <rect width="96" height="56" fill="#35383a" />
          <path d="M0 0h96v6H0z" fill="#c42e26" />
          <path d="M2 1.500h88M4 4h40" stroke="#e89088" strokeWidth=".9" strokeDasharray="5 2" />
          <path d="M26 8h44v48H26z" fill="#fff" />
          <path d="M34 10h18M34 20h20" stroke="#999" strokeWidth="1" />
          <path d="M41 53.500h15" stroke="#333" strokeWidth="2" />
          <path d="M40 12h16v6H40zM34 22h28v7H34zM38 31h22v9H38z" fill="#b4b8b4" />
          <path d="M36 44h14M36 47h20M36 50h16" stroke="#999" strokeWidth=".8" />
          <path d="M88 7h6" stroke="#3a6ab8" strokeWidth="2" />
        </svg>
        <Badge />
      </Thumb>
      <Thumb w="w-[96px] mr-[13px]">
        <svg viewBox="0 0 96 56" className="mt-[13px] h-[56px] w-[96px]">
          <rect width="96" height="56" fill="#202020" />
          <path d="M0 0h96v6H0z" fill="#54302c" />
          <path d="M0 6h14v50H0z" fill="#181818" />
          <path d="M2 1.500h88M4 4h40" stroke="#8c6660" strokeWidth=".9" strokeDasharray="5 2" />
          <path d="M2 10h6M2 14h7M2 18h6M2 25h10M2 29h8M2 33h9M2 37h8M58 10h16" stroke="#505050" strokeWidth="1" />
          <path d="M34 14h38M34 16h42M34 18h6" stroke="#4a70a4" strokeWidth="1.800" />
        </svg>
        <Badge />
      </Thumb>
      <Thumb w="w-[94px] mr-[27px]">
        <div className="mt-[34px] flex h-[12px] w-[94px] items-center rounded-[2px] bg-[#1e1f20] pl-[6px] text-[5px] leading-none text-[#d0d0d0]">
          <span className="w-[52px] whitespace-nowrap text-[2.8px]">meet.google.com is sharing a window.</span>
          <span className="flex h-[9px] w-[25px] items-center justify-center whitespace-nowrap rounded-full bg-[#a9c4f5] text-[3.5px] text-[#1c3c78]">Stop sharing</span>
          <span className="ml-[2px] text-[3px] text-[#8ab0f0]">Hide</span>
        </div>
        <Badge />
      </Thumb>
      <svg viewBox="0 0 74 92" className="-mt-[5px] h-[92px] w-[74px] shrink-0">
        <defs>
          <linearGradient id="tr" x1="0" y1="0" x2="1" y2="0">
            <stop offset="0" stopColor="#777b7e" />
            <stop offset=".25" stopColor="#54585b" />
            <stop offset=".8" stopColor="#5c6063" />
            <stop offset="1" stopColor="#7c8083" />
          </linearGradient>
        </defs>
        <path d="M1 10l10 72q1 9 26 9t26-9L73 10z" fill="url(#tr)" />
        <ellipse cx="37" cy="10" rx="36" ry="8.500" fill="#434749" stroke="#85898b" strokeWidth="1.400" />
        <ellipse cx="24" cy="83" rx="12" ry="6" fill="#a0a4a6" fillOpacity=".4" />
      </svg>
    </div>
  );
}

export default function App() {
  return (
    <div className="flex h-[2234px] w-[3456px] flex-col overflow-hidden bg-black font-['Inter',sans-serif]">
      <MenuBar />
      <header className="flex h-[230px] flex-col overflow-hidden rounded-t-[20px] border-x-2 border-t-2 border-[#6a6a6d] bg-[#3b3a3e]">
        <TabStrip />
        <ToolBar />
        <BookmarksBar />
        <div className="mt-auto h-[2px] w-full bg-[#2e2d31]" />
      </header>
      <Page />
      <Dock />
    </div>
  );
}
